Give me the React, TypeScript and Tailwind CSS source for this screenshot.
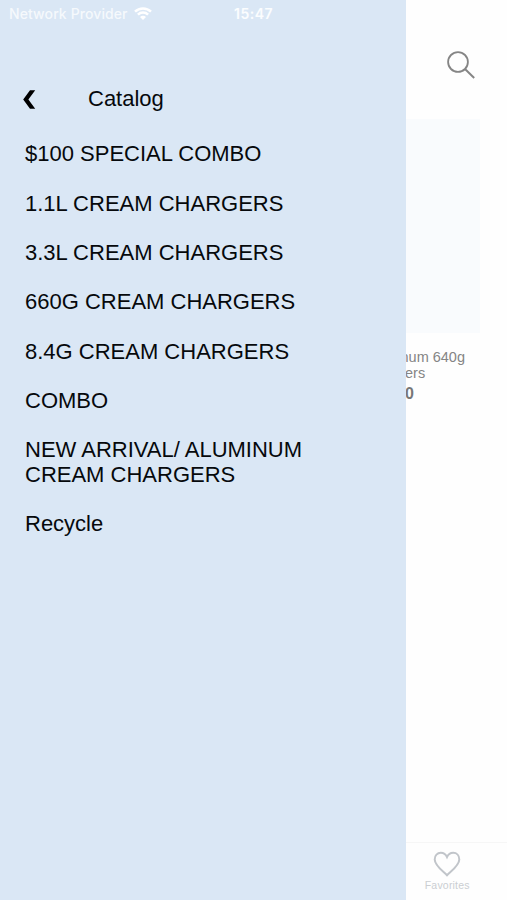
const items = [
  "$100 SPECIAL COMBO",
  "1.1L CREAM CHARGERS",
  "3.3L CREAM CHARGERS",
  "660G CREAM CHARGERS",
  "8.4G CREAM CHARGERS",
  "COMBO",
  "NEW ARRIVAL/ ALUMINUM CREAM CHARGERS",
  "Recycle",
];

function Drawer() {
  return (
    <aside className="flex w-[406px] shrink-0 flex-col bg-[#dae7f5]">
      <div className="flex h-[26px] items-center pl-[9px] font-['Inter',sans-serif] text-white/75">
        <span className="w-[120px] whitespace-nowrap text-[14px] font-medium tracking-[0.1px]">Network Provider</span>
        <svg className="ml-[5px] h-[13px] w-[18px]" viewBox="0 0 18 13" fill="none" stroke="white" strokeWidth="2.5">
          <path d="M1 4.7C5.5.3 12.5.3 17 4.7" />
          <path d="M3.9 7.7c2.9-2.8 7.3-2.8 10.2 0" />
          <path d="M6 10C7.6 8.4 10.4 8.4 12 10l-3 3z" fill="white" stroke="none" />
        </svg>
        <span className="ml-[82px] text-[14px] font-semibold tracking-[0.5px] text-white/90">15:47</span>
      </div>
      <header className="mt-[58px] flex h-7 items-center pl-[23px]">
        <svg className="mt-[3px] h-[19px] w-[13px]" viewBox="0 0 13 19" fill="black">
          <path d="M7 .3H12.2L5.4 9.5 12.2 18.8H7L0.2 9.5Z" />
        </svg>
        <h1 className="ml-[52px] text-[22px]">Catalog</h1>
      </header>
      <nav className="mt-[30.4px] flex flex-col gap-[24.65px] pl-[25px]">
        {items.map((item) => (
          <a key={item} className="w-[320px] text-[22px] leading-[24.65px]">{item}</a>
        ))}
      </nav>
    </aside>
  );
}

function Storefront() {
  return (
    <main className="flex min-w-0 grow flex-col overflow-hidden">
      <div className="flex h-[119px] justify-end pr-[31px] pt-[50px]">
        <svg className="h-[30px] w-[30px]" viewBox="0 0 30 30" fill="none" stroke="#858585" strokeWidth="1.8">
          <circle cx="12" cy="12" r="9.9" />
          <path d="m19 19 9.2 9" strokeWidth="2" />
        </svg>
      </div>
      <div className="h-[214px] w-[74px] bg-[#f9fbfd]" />
      <div className="mt-4 flex w-[75px] flex-col text-[14.5px] leading-4 text-[#858585]">
        <span className="-ml-[5.5px] whitespace-nowrap">num 640g</span>
        <span className="-ml-[1px]">ers</span>
        <strong className="-ml-[1px] mt-[3px] text-[16px] leading-5 text-[#777]">0</strong>
      </div>
      <footer className="mt-auto flex h-[58px] flex-col items-center border-t border-[#f6f6f6] pr-[18.5px] pt-[7.5px] text-[#c1c5ca]">
        <svg className="h-[26px] w-[28px]" viewBox="0 0 28 26" fill="none" stroke="currentColor" strokeWidth="2">
          <path d="M14 24.2C10.5 20.5 1.7 14.5 1.7 8.4 1.7 4.5 4.3 1.8 7.8 1.8c2.8 0 5 1.6 6.2 4.2 1.2-2.6 3.4-4.2 6.2-4.2 3.5 0 6.1 2.7 6.1 6.6 0 6.1-8.8 12.1-12.3 15.8Z" />
        </svg>
        <span className="mt-[2.5px] text-[10.5px] leading-3 tracking-[0.2px] text-[#cbced2]">Favorites</span>
      </footer>
    </main>
  );
}

export default function App() {
  return (
    <div className="flex h-[900px] w-[507px] overflow-hidden bg-[#fefefe] font-['Liberation_Sans',Arial,sans-serif] text-[#06090c]">
      <Drawer />
      <Storefront />
    </div>
  );
}
